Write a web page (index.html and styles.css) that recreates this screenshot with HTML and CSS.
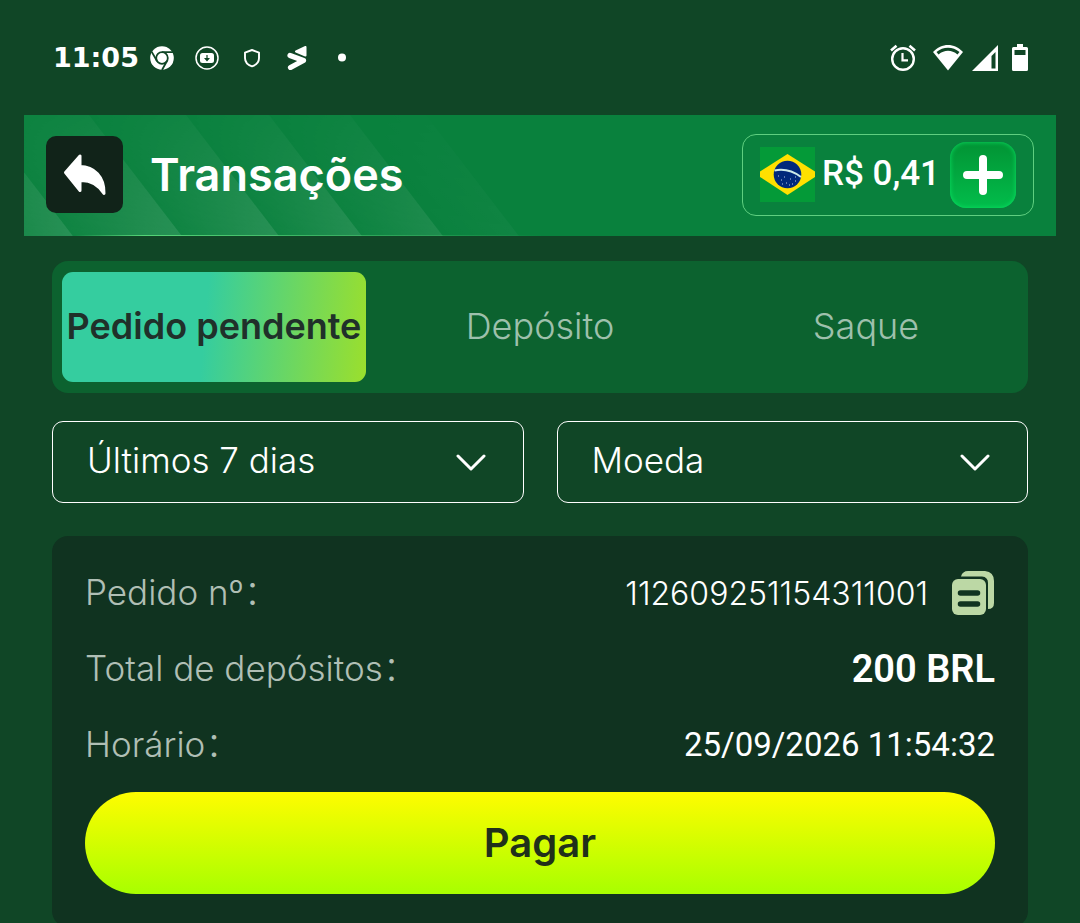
FILE: index.html
```html
<!DOCTYPE html>
<html lang="pt-BR">
<head>
<meta charset="utf-8">
<meta name="viewport" content="width=device-width, initial-scale=1">
<title>Transações</title>
<link rel="stylesheet" href="styles.css">
</head>
<body>
<div class="app">
  <div class="status-bar">
    <div class="status-left">
      <time class="clock">11:05</time>
      <svg class="notif" viewBox="0 0 24 24" aria-hidden="true">
        <circle cx="12" cy="12" r="11.800" fill="#fff"/>
        <circle cx="12" cy="12" r="5.800" fill="none" stroke="#104626" stroke-width="1.800"/>
        <path d="M12 6.200H23M7 15L1.600 5.600M17 15L12 24" stroke="#104626" stroke-width="1.800" fill="none"/>
      </svg>
      <svg class="notif" viewBox="0 0 24 24" aria-hidden="true">
        <circle cx="12" cy="12" r="11" fill="none" stroke="#fff" stroke-width="1.500"/>
        <rect x="5" y="7" width="14" height="10" rx="2.500" fill="#fff"/>
        <path d="M12 9V12M10.300 12.500h3.400L12 14.500Z" stroke="#104626" stroke-width="1.200" fill="#104626"/>
      </svg>
      <svg class="notif" viewBox="0 0 24 24" aria-hidden="true">
        <path d="M12 4L19 6.600V12C19 16 16 19 12 20.400C8 19 5 16 5 12V6.600Z" fill="none" stroke="#fff" stroke-width="1.900" stroke-linejoin="round"/>
      </svg>
      <svg class="notif" viewBox="0 0 24 24" aria-hidden="true">
        <path d="M20.500 1V9.500L11 5.500Z" fill="#fff" stroke="#fff" stroke-width="2" stroke-linejoin="round"/>
        <path d="M5 9.500L18.500 14.500L5.500 21.500" fill="none" stroke="#fff" stroke-width="5.200" stroke-linejoin="round" stroke-linecap="round"/>
      </svg>
      <svg class="notif" viewBox="0 0 24 24" aria-hidden="true"><circle cx="12" cy="11.500" r="4" fill="#fff"/></svg>
    </div>
    <div class="status-right">
      <svg width="28" height="28" viewBox="0 0 28 28" fill="none" stroke="#fff" aria-hidden="true">
        <circle cx="14" cy="15" r="10.800" stroke-width="2.400"/>
        <path d="M13.500 9V16.300H19" stroke-width="2.200"/>
        <path d="M2 6.500L7.500 1.800M26 6.500L20.500 1.800" stroke-width="2.600"/>
      </svg>
      <svg class="wifi" width="32" height="28" viewBox="0 0 32 28" aria-hidden="true">
        <path d="M1 8C9.500-1.500 22.500-1.500 31 8L16 26.500Z" fill="#fff"/>
        <path d="M4.500 8C11 2.200 21 2.200 27.500 8L25.500 10.500C19.500 5.500 12.500 5.500 6.500 10.500Z" fill="#104626"/>
      </svg>
      <svg class="signal" width="27" height="28" viewBox="0 0 27 28" aria-hidden="true">
        <path d="M26 1V27H0Z" fill="#fff"/><path d="M19.500 12L23.500 8V24.500H19.500Z" fill="#104626"/>
      </svg>
      <svg width="16" height="28" viewBox="0 0 16 28" aria-hidden="true">
        <path d="M5 0H11V3H14.500Q16 3 16 4.500V25.500Q16 27 14.500 27H1.500Q0 27 0 25.500V4.500Q0 3 1.500 3H5Z" fill="#fff"/>
        <rect x="2.500" y="6" width="11" height="5" fill="#104626"/>
      </svg>
    </div>
  </div>

  <header class="header">
    <svg class="header-art" viewBox="0 0 520 121" preserveAspectRatio="none" aria-hidden="true">
      <defs>
        <linearGradient id="ray"><stop offset="0" stop-color="#fff" stop-opacity="0.030"/><stop offset="1" stop-color="#fff" stop-opacity="0.130"/></linearGradient>
        <linearGradient id="fade" x1="0" y1="0" x2="0" y2="1"><stop offset="0" stop-color="#fff" stop-opacity="0.250"/><stop offset="1" stop-color="#fff"/></linearGradient>
        <mask id="rise" maskUnits="userSpaceOnUse" x="0" y="0" width="520" height="121"><rect width="520" height="121" fill="url(#fade)"/></mask>
        <linearGradient id="edge"><stop offset="0" stop-color="#55d477" stop-opacity="0"/><stop offset="0.150" stop-color="#55d477"/><stop offset="1" stop-color="#55d477" stop-opacity="0"/></linearGradient>
      </defs>
      <g mask="url(#rise)">
        <g transform="skewX(37.500)" fill="url(#ray)">
          <rect x="-130" width="86" height="121"/>
          <rect x="-44" width="109" height="121"/>
          <rect x="65" width="97" height="121"/>
          <rect x="162" width="83" height="121" opacity="0.900"/>
          <rect x="245" width="81" height="121" opacity="0.700"/>
          <rect x="326" width="76" height="121" opacity="0.250"/>
        </g>
      </g>
      <path d="M50 120H520V121H50Z" fill="url(#edge)"/>
    </svg>
    <button class="back" type="button" aria-label="Voltar">
      <svg width="44" height="44" viewBox="0 0 44 44" aria-hidden="true">
        <path d="M2.500 19.500L17 3V13.500C31 13.500 41.500 24 41 40.500C35 31 28 27 17 27.500V37.500Z" fill="#fff" stroke="#fff" stroke-width="3" stroke-linejoin="round"/>
      </svg>
    </button>
    <h1 class="title">Transações</h1>
    <div class="balance">
      <svg class="flag" viewBox="0 0 55 55" role="img" aria-label="Brasil">
        <rect width="55" height="55" fill="#049a38"/>
        <path d="M0 24.500L27.500 7L55 24.500V30L27.500 48L0 30Z" fill="#ffe000"/>
        <circle cx="27.500" cy="27.500" r="13.800" fill="#00297b"/>
        <path d="M14.500 23.500C24 21.500 33 24 41 30" fill="none" stroke="#cdebe9" stroke-width="2"/>
        <path d="M18 29h1M21 33h1M24 30h1M26 36h1M30 32h1M32 37h1M35 34h1M29 38h1M22 37h1M35 30h1" stroke="#b9cbe8" stroke-width="1"/>
      </svg>
      <span class="amount">R$ 0,41</span>
      <button class="add" type="button" aria-label="Depositar">
        <svg width="40" height="40" viewBox="0 0 40 40" aria-hidden="true"><path d="M20 4V36M4 20H36" stroke="#fff" stroke-width="8" stroke-linecap="round"/></svg>
      </button>
    </div>
  </header>

  <main class="content">
    <nav class="tabs">
      <button class="tab tab-active" type="button">Pedido pendente</button>
      <button class="tab" type="button">Depósito</button>
      <button class="tab" type="button">Saque</button>
    </nav>

    <div class="filters">
      <div class="filter">
        <select class="select" aria-label="Período"><option>Últimos 7 dias</option></select>
        <svg class="chevron" viewBox="0 0 30 18" aria-hidden="true"><path d="M2 2L15 15L28 2" fill="none" stroke="#fff" stroke-width="3" stroke-linecap="round" stroke-linejoin="round"/></svg>
      </div>
      <div class="filter">
        <select class="select" aria-label="Moeda"><option>Moeda</option></select>
        <svg class="chevron" viewBox="0 0 30 18" aria-hidden="true"><path d="M2 2L15 15L28 2" fill="none" stroke="#fff" stroke-width="3" stroke-linecap="round" stroke-linejoin="round"/></svg>
      </div>
    </div>

    <section class="card">
      <dl class="details">
        <div class="row">
          <dt class="label">Pedido nº：</dt>
          <dd class="value order">112609251154311001
            <button class="copy" type="button" aria-label="Copiar">
              <svg width="43" height="44" viewBox="0 0 43 44" aria-hidden="true">
                <path d="M9 5.500Q10.500 0 16 0H33Q42 1 42 10V32Q42 38 36 38V12Q36 6 30 5.500Z" fill="#bcd8a5"/>
                <rect x="0" y="8" width="34" height="36" rx="6" fill="#bcd8a5"/>
                <path d="M8.500 22H25.500M8.500 33H25.500" stroke="#103320" stroke-width="5.500" stroke-linecap="round"/>
              </svg>
            </button>
          </dd>
        </div>
        <div class="row">
          <dt class="label">Total de depósitos：</dt>
          <dd class="value total">200 BRL</dd>
        </div>
        <div class="row">
          <dt class="label">Horário：</dt>
          <dd class="value date">25/09/2026 11:54:32</dd>
        </div>
      </dl>
      <button class="pay" type="button">Pagar</button>
    </section>
  </main>
</div>
</body>
</html>
```
FILE: styles.css
```css
* { box-sizing: border-box; }

body {
  margin: 0;
  background: #104626;
  color: #fff;
  font-family: Inter, "Noto Sans CJK SC", sans-serif;
}

button {
  border: 0;
  padding: 0;
  font: inherit;
  color: inherit;
  background: none;
  cursor: pointer;
}

svg { display: block; flex: none; }

.app {
  height: 100vh;
  overflow: hidden;
  padding: 0 24px;
}

.status-bar {
  display: flex;
  justify-content: space-between;
  align-items: center;
  height: 115px;
  padding: 0 28px 0 29px;
}

.status-left { display: flex; align-items: center; gap: 21px; }
.clock { font: 700 27px/36px "DejaVu Sans", sans-serif; margin-right: -10px; }
.notif { width: 24px; height: 24px; }
.status-right { display: flex; align-items: center; gap: 13px; }
.wifi { margin: 0 -5px 0 2px; }

.header {
  position: relative;
  display: flex;
  align-items: center;
  height: 121px;
  padding: 0 22px 2px;
  background: #09813d;
}

.header-art {
  position: absolute;
  top: 0;
  left: 0;
  width: 520px;
  height: 100%;
}

.back {
  position: relative;
  display: grid;
  place-items: center;
  width: 77px;
  height: 77px;
  border-radius: 10px;
  background: #112319;
}

.title {
  position: relative;
  margin: 0 auto 0 27px;
  font-size: 45px;
  font-weight: 600;
  line-height: 52px;
}

.balance {
  display: flex;
  align-items: center;
  height: 82px;
  padding: 0 17px;
  border: 1px solid #5fcf80;
  border-radius: 14px;
}

.flag { width: 55px; height: 55px; }

.amount {
  margin: 0 10px 0 7px;
  padding-bottom: 2px;
  font: 500 35px/40px Roboto, sans-serif;
}

.add {
  display: grid;
  place-items: center;
  width: 66px;
  height: 66px;
  border-radius: 16px;
  background: linear-gradient(#029334, #02bd4b);
  box-shadow: inset 0 0 5px #08e363;
}

.content { padding: 25px 28px; }

.tabs {
  display: grid;
  grid-template-columns: repeat(3, 1fr);
  gap: 22px;
  padding: 11px 10px;
  border-radius: 16px;
  background: #0c622f;
}

.tab {
  height: 110px;
  padding-bottom: 2px;
  border-radius: 11px;
  font-size: 36px;
  font-weight: 300;
  white-space: nowrap;
  color: #9ec0ac;
}

.tab-active {
  font-weight: 600;
  color: #20302a;
  background: linear-gradient(95deg, #35cd9f 47%, #9bdf2d);
}

.filters {
  display: grid;
  grid-template-columns: 1fr 1fr;
  gap: 33px;
  margin-top: 28px;
}

.filter { position: relative; }

.select {
  appearance: none;
  width: 100%;
  height: 82px;
  padding: 0 80px 4px 34px;
  border: 1px solid #fff;
  border-radius: 11px;
  background: transparent;
  color: #fff;
  font: 300 35px/40px Inter, sans-serif;
}

.chevron {
  position: absolute;
  top: 33px;
  right: 38px;
  width: 30px;
  height: 18px;
  pointer-events: none;
}

.card {
  margin-top: 33px;
  padding: 19px 33px 33px;
  border-radius: 16px;
  background: #103320;
}

.details { margin: 0; }

.row {
  display: flex;
  align-items: center;
  justify-content: space-between;
  height: 76px;
}

.label {
  padding-bottom: 2px;
  font-size: 35px;
  font-weight: 300;
  line-height: 40px;
  color: #b0bfb5;
}

.value { margin: 0; }
.order { display: flex; align-items: center; gap: 24px; font-size: 32px; font-weight: 300; }
.total { font: 600 38px/44px Roboto, sans-serif; }
.date { font: 400 33px/40px Roboto, sans-serif; }

.pay {
  display: block;
  width: 100%;
  height: 102px;
  margin-top: 9px;
  padding-bottom: 2px;
  border-radius: 51px;
  background: linear-gradient(#fffc00, #a8ff00);
  color: #20301a;
  font-size: 40px;
  font-weight: 600;
}
```
